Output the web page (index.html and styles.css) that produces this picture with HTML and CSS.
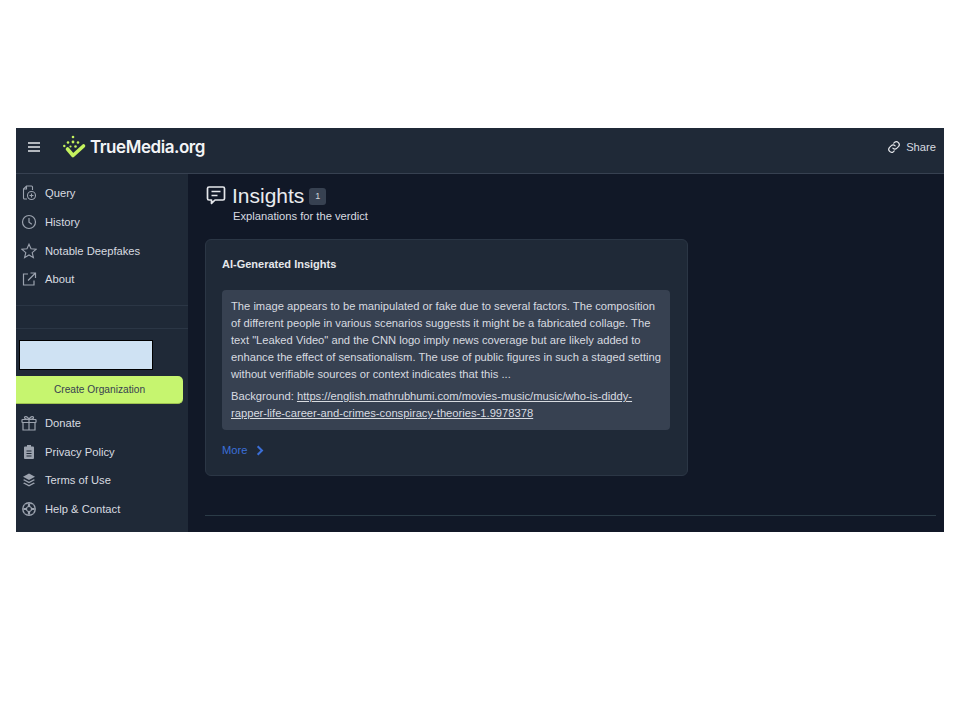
FILE: index.html
```html
<!DOCTYPE html>
<html lang="en">
<head>
<meta charset="utf-8">
<title>TrueMedia.org Insights</title>
<link rel="stylesheet" href="styles.css">
</head>
<body>
<div class="app">
  <header class="topbar">
    <svg class="menu-icon" viewBox="0 0 14 12" width="14" height="12"><path d="M1 2h12M1 6h12M1 10h12" stroke="#e5e7eb" stroke-width="1.5" fill="none"/></svg>
    <svg class="logo-mark" viewBox="0 0 24 24" width="24" height="24">
      <path d="M4.500 14l5.500 6.500L20.500 11" fill="none" stroke="#c4f25e" stroke-width="3.600" stroke-linecap="round" stroke-linejoin="round"/>
      <g fill="#c4f25e">
        <circle cx="10" cy="2" r="1.300"/><circle cx="5" cy="7.500" r="1.300"/><circle cx="10" cy="7" r="1.400"/><circle cx="15" cy="7.500" r="1.300"/>
        <circle cx="1.300" cy="11" r="1.200"/><circle cx="12.500" cy="11.500" r="1.300"/><circle cx="7.500" cy="11.500" r="1.100"/>
      </g>
    </svg>
    <span class="logo-text">TrueMedia.org</span>
    <a class="share">
      <svg viewBox="0 0 24 24" width="14" height="14" fill="none" stroke="#e5e7eb" stroke-width="2" stroke-linecap="round"><path d="M10 14a5 5 0 0 0 7 0l3-3a5 5 0 0 0-7-7l-1.500 1.500"/><path d="M14 10a5 5 0 0 0-7 0l-3 3a5 5 0 0 0 7 7l1.500-1.500"/></svg>
      Share
    </a>
  </header>
  <div class="body">
    <aside class="sidebar">
      <nav class="nav">
        <a class="nav-item"><svg class="nav-icon" viewBox="0 0 16 16" fill="none" stroke="#9ca3af" stroke-width="1.100"><path d="M6 14H3.500a1 1 0 0 1-1-1V4l3-3h5a1 1 0 0 1 1 1v3"/><path d="M5.500 1v3h-3"/><circle cx="10.500" cy="10.500" r="4"/><path d="M10.500 8.500v4M8.500 10.500h4"/></svg>Query</a>
        <a class="nav-item"><svg class="nav-icon" viewBox="0 0 16 16" fill="none" stroke="#9ca3af" stroke-width="1.200"><circle cx="8" cy="8" r="6.500"/><path d="M8 4v4.300l2.800 2"/></svg>History</a>
        <a class="nav-item"><svg class="nav-icon" viewBox="0 0 16 16" fill="none" stroke="#9ca3af" stroke-width="1.100"><path d="M8 1.200l2 4.600 5 .5-3.800 3.300 1.200 5L8 12l-4.400 2.600 1.200-5L1 6.300l5-.5z"/></svg>Notable Deepfakes</a>
        <a class="nav-item"><svg class="nav-icon" viewBox="0 0 16 16" fill="none" stroke="#9ca3af" stroke-width="1.200"><path d="M7 3H2.500v11h10.500V9.500"/><path d="M7 9.500L14 2.500M9.500 2h5v5"/></svg>About</a>
      </nav>
      <div class="rule"></div>
      <div class="rule rule-second"></div>
      <div class="blank-box"></div>
      <button class="create">Create Organization</button>
      <nav class="nav nav-lower">
        <a class="nav-item"><svg class="nav-icon" viewBox="0 0 16 16" fill="none" stroke="#9ca3af" stroke-width="1.200"><rect x="1" y="4.500" width="14" height="3" rx=".5"/><path d="M2 7.500V15h12V7.500M8 4.500V15M8 4.500C6 4.500 3.500 4 3.500 2.500S6.500 1 8 4.500zM8 4.500c2 0 4.500-.5 4.500-2S9.500 1 8 4.500z"/></svg>Donate</a>
        <a class="nav-item"><svg class="nav-icon" viewBox="0 0 16 16"><path fill="#9ca3af" d="M6 1h4v1.500h2a1 1 0 0 1 1 1V14a1 1 0 0 1-1 1H4a1 1 0 0 1-1-1V3.500a1 1 0 0 1 1-1h2z"/><path d="M5.500 7h5M5.500 9.500h5M5.500 12h5" stroke="#1f2937" stroke-width="1.100"/></svg>Privacy Policy</a>
        <a class="nav-item"><svg class="nav-icon" viewBox="0 0 16 16" fill="#9ca3af"><path d="M8 1.500l6 3.200-6 3.200-6-3.200z"/><path d="M3.300 7.300L8 9.800l4.700-2.500 1.300.8-6 3.200-6-3.200z"/><path d="M3.300 10.500L8 13l4.700-2.500 1.300.8-6 3.200-6-3.200z"/></svg>Terms of Use</a>
        <a class="nav-item"><svg class="nav-icon" viewBox="0 0 16 16" fill="none" stroke="#9ca3af"><circle cx="8" cy="8" r="6.200" stroke-width="1.400"/><circle cx="8" cy="8" r="2.600" stroke-width="1.300"/><path d="M3.700 3.700l2.500 2.500M12.300 3.700L9.800 6.200M3.700 12.300l2.500-2.500M12.300 12.300L9.800 9.800" stroke="#1f2937" stroke-width="1.200"/><path d="M8 2.500v2.800M8 10.700v2.800M2.500 8h2.800M10.700 8h2.800" stroke-width="2.200"/></svg>Help &amp; Contact</a>
      </nav>
    </aside>
    <main class="main">
      <div class="title-row">
        <svg class="title-icon" viewBox="0 0 20 20" width="20" height="20" fill="none" stroke="#e5e7eb" stroke-width="1.700" stroke-linejoin="round"><path d="M3 2h14a1.500 1.500 0 0 1 1.500 1.500v10A1.500 1.500 0 0 1 17 15h-8l-3.500 3.300V15H3a1.500 1.500 0 0 1-1.500-1.500v-10A1.500 1.500 0 0 1 3 2z"/><path d="M5.500 6.500h9M5.500 10.500h6"/></svg>
        <h1 class="title">Insights</h1>
        <span class="badge">1</span>
      </div>
      <p class="subtitle">Explanations for the verdict</p>
      <section class="card">
        <h2 class="card-title">AI-Generated Insights</h2>
        <div class="quote">
          <p class="quote-text">The image appears to be manipulated or fake due to several factors. The composition of different people in various scenarios suggests it might be a fabricated collage. The text "Leaked Video" and the CNN logo imply news coverage but are likely added to enhance the effect of sensationalism. The use of public figures in such a staged setting without verifiable sources or context indicates that this ...</p>
          <p class="quote-source">Background: <a class="source-link">https://english.mathrubhumi.com/movies-music/music/who-is-diddy-rapper-life-career-and-crimes-conspiracy-theories-1.9978378</a></p>
        </div>
        <a class="more">More <svg viewBox="0 0 10 14" width="8" height="11" fill="none" stroke="#3b6fd8" stroke-width="2.600"><path d="M2 1.500L7.500 7 2 12.500"/></svg></a>
      </section>
      <div class="divider"></div>
    </main>
  </div>
</div>
</body>
</html>
```
FILE: styles.css
```css
* { box-sizing: border-box; }
html, body { margin: 0; background: #fff; }
body { padding: 128px 16px 188px; font-family: "Liberation Sans", Arial, sans-serif; font-size: 11.200px; color: #d8dbe0; }
p, h1, h2 { margin: 0; }
.app { width: 928px; height: 404px; background: #111827; display: flex; flex-direction: column; overflow: hidden; }
.topbar { height: 46px; flex: none; background: #1f2937; border-bottom: 1px solid #374151; display: flex; align-items: center; padding: 0 8px 8px 11px; }
.menu-icon { flex: none; }
.logo-mark { flex: none; margin-left: 22px; }
.logo-text { margin-left: 3px; font-family: Inter, "Liberation Sans", sans-serif; font-size: 17px; font-weight: 600; letter-spacing: -0.450px; color: #f3f4f6; }
.share { margin-left: auto; display: flex; align-items: center; gap: 5px; font-size: 11.200px; color: #d8dbe0; }
.body { flex: 1; display: flex; min-height: 0; }
.sidebar { width: 172px; flex: none; background: #1f2937; padding-top: 5px; }
.nav { display: flex; flex-direction: column; }
.nav-item { height: 28.700px; display: flex; align-items: center; gap: 8px; padding-left: 5px; font-size: 11.200px; color: #d8dbe0; }
.nav-icon { width: 16px; height: 16px; flex: none; }
.rule { height: 1px; background: #2b3645; margin-top: 11px; }
.rule-second { margin-top: 22px; }
.blank-box { width: 134px; height: 30px; margin: 11px 0 0 3px; background: #cfe2f3; border: 1px solid #000; }
.create { display: block; width: 167px; height: 28px; margin-top: 6px; padding: 0; background: #c6f56f; border: 0; border-radius: 0 5px 5px 0; border-bottom: 1px solid #9ec24f; font: 10.200px "Liberation Sans", Arial, sans-serif; color: #374151; }
.nav-lower { margin-top: 5px; }
.main { flex: 1; padding: 11px 8px 0 17px; min-width: 0; }
.title-row { display: flex; align-items: center; height: 22px; }
.title-icon { flex: none; margin: -2px 0 0 1px; }
.title { margin-left: 6px; font-size: 21px; font-weight: 400; color: #e9ebee; }
.badge { margin-left: 5px; width: 17px; height: 17px; background: #374151; border-radius: 3px; font-size: 9px; display: flex; align-items: center; justify-content: center; color: #d1d5db; }
.subtitle { margin: 2px 0 0 28px; font-size: 11.200px; color: #d8dbe0; line-height: 14px; }
.card { width: 483px; height: 237px; margin-top: 16px; padding: 16px; background: #1f2937; border: 1px solid #2b3645; border-radius: 6px; }
.card-title { font-size: 11px; font-weight: 700; color: #e5e7eb; line-height: 16px; }
.quote { width: 448px; margin-top: 18px; padding: 8px 9px; height: 140px; background: #374151; border-radius: 4px; font-size: 11.200px; line-height: 17px; color: #d8dbe0; }
.quote-source { margin-top: 5px; }
.source-link { text-decoration: underline; }
.more { display: flex; align-items: center; gap: 8px; margin-top: 14px; color: #3b6fd8; font-size: 11.200px; }
.divider { height: 1px; background: #2b3b47; margin-top: 39px; }
```
